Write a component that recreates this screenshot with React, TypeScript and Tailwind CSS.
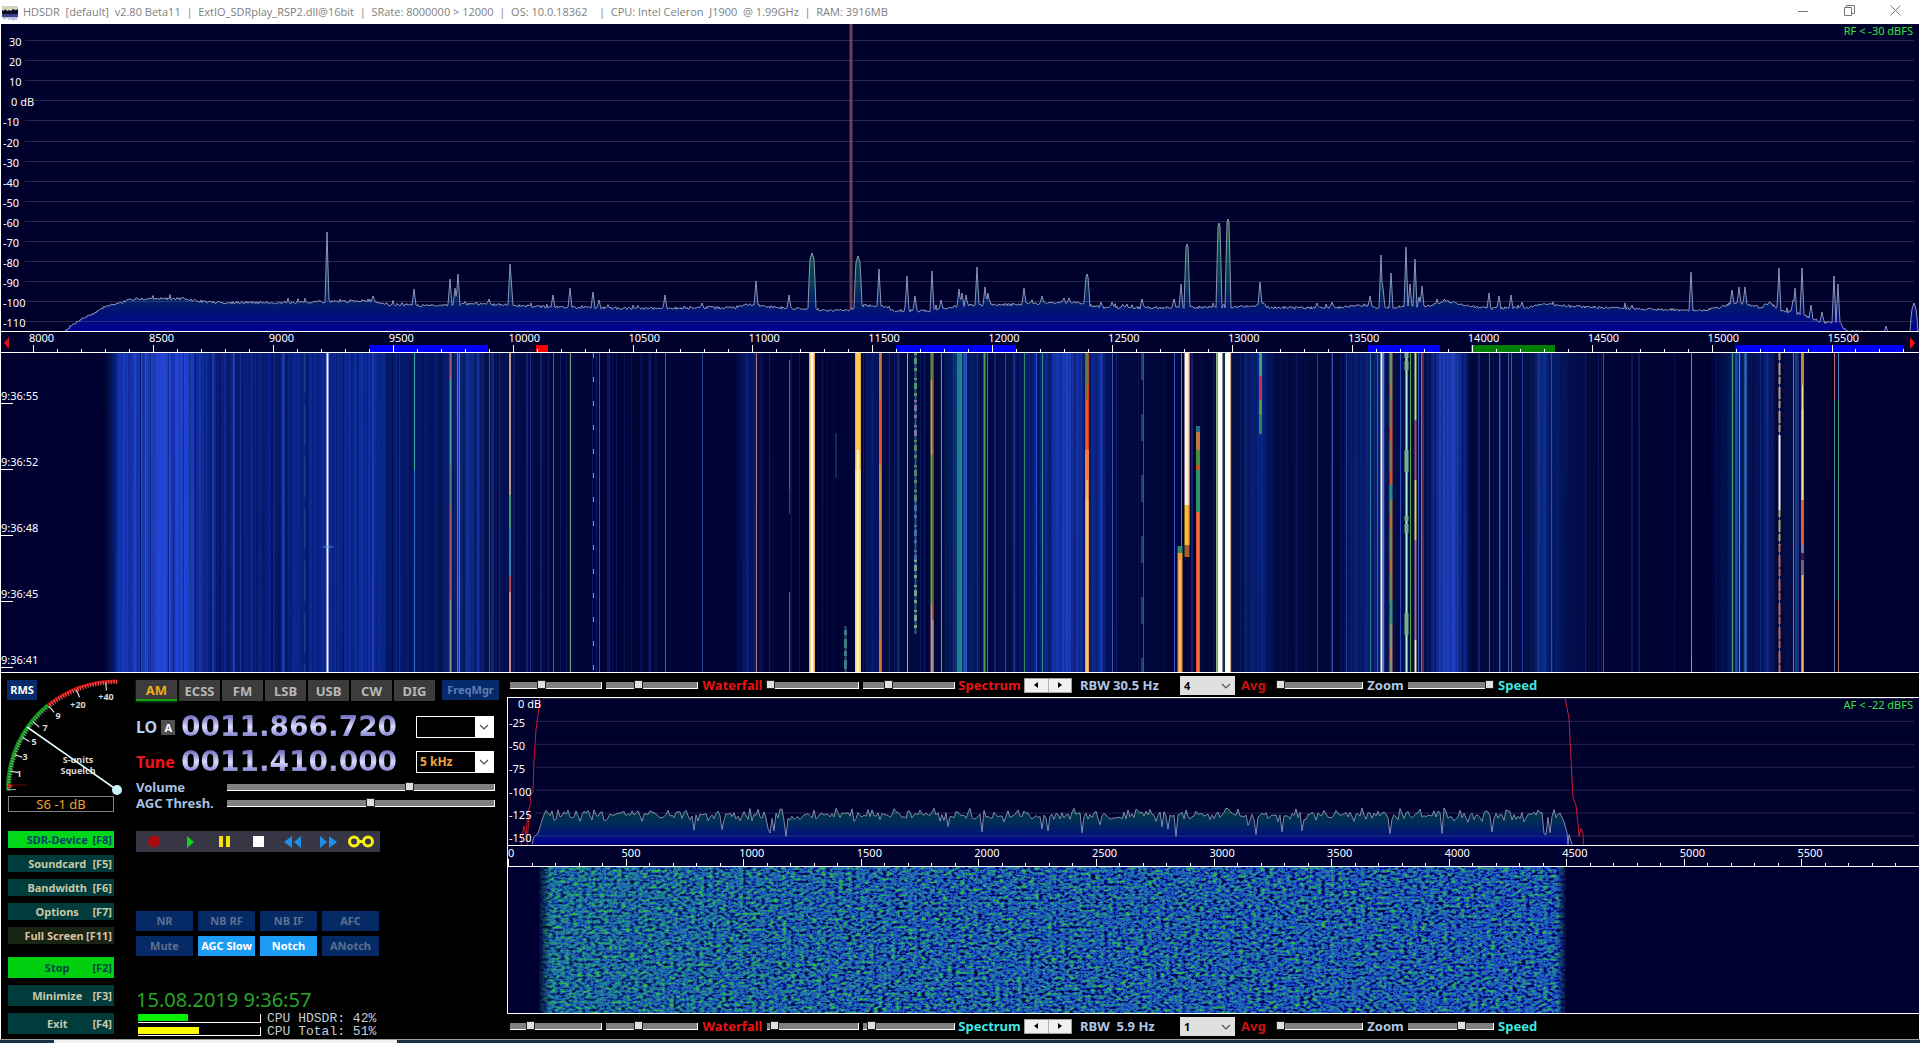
import { useState } from "react";
import type { ReactNode } from "react";

type Point = [number, number];

// small seeded generator so the traces look the same on every load
function createRandom(seed: number) {
  let s = seed;
  return () => {
    s = (s * 1664525 + 1013904223) % 4294967296;
    return s / 4294967296;
  };
}

const baseline: Point[] = [
  [65, 331], [80, 320], [95, 313], [105, 307], [125, 302], [135, 299], [180, 299], [195, 301],
  [215, 303], [290, 303], [330, 302], [370, 301], [390, 305], [430, 306], [470, 304], [500, 305],
  [540, 307], [640, 309], [735, 308], [745, 305], [780, 308], [800, 309], [812, 309], [825, 311],
  [850, 310], [860, 306], [880, 306], [895, 311], [930, 311], [960, 306], [1010, 305], [1060, 303],
  [1080, 303], [1100, 308], [1170, 308], [1250, 307], [1262, 304], [1270, 308], [1340, 308],
  [1360, 305], [1380, 308], [1430, 306], [1445, 301], [1465, 306], [1490, 309], [1530, 308],
  [1545, 304], [1560, 306], [1600, 308], [1700, 311], [1720, 308], [1730, 304], [1745, 304],
  [1760, 308], [1770, 303], [1780, 311], [1800, 314], [1815, 320], [1825, 323], [1840, 323],
  [1843, 329], [1850, 332], [1919, 333],
];

// x, top, half width
const peaks: [number, number, number][] = [
  [327, 232, 1], [373, 296, 1], [414, 289, 1], [450, 279, 1], [455, 288, 1], [458, 274, 1],
  [489, 299, 1], [510, 264, 1], [511, 276, 1], [553, 295, 1], [570, 288, 1], [593, 292, 1],
  [599, 300, 1], [665, 295, 1], [702, 303, 1], [756, 281, 1], [789, 295, 1], [812, 253, 3],
  [858, 256, 3], [879, 269, 1], [907, 276, 1], [915, 296, 1], [932, 271, 1], [941, 300, 1],
  [959, 289, 1], [962, 293, 1], [966, 295, 1], [977, 267, 1], [985, 287, 1], [988, 293, 1],
  [1024, 288, 1], [1042, 296, 1], [1064, 298, 1], [1069, 298, 1], [1087, 274, 2], [1101, 302, 1],
  [1112, 302, 1], [1142, 299, 1], [1174, 299, 1], [1181, 284, 1], [1187, 244, 2], [1219, 223, 2],
  [1228, 219, 2], [1260, 282, 1], [1317, 303, 1], [1332, 302, 1], [1370, 296, 1], [1381, 255, 1],
  [1383, 288, 1], [1391, 273, 1], [1406, 247, 1], [1410, 284, 1], [1415, 259, 1], [1419, 297, 1],
  [1422, 286, 1], [1489, 293, 1], [1499, 296, 1], [1511, 295, 1], [1522, 302, 1], [1691, 272, 1],
  [1732, 290, 1], [1739, 287, 1], [1745, 287, 1], [1779, 268, 1], [1793, 300, 1], [1795, 288, 1],
  [1802, 268, 1], [1811, 305, 1], [1822, 312, 1], [1834, 276, 1], [1838, 284, 1], [1886, 326, 1],
  [1914, 303, 3],
];

function levelAt(x: number) {
  for (let i = 1; i < baseline.length; i++) {
    const [x0, y0] = baseline[i - 1];
    const [x1, y1] = baseline[i];
    if (x <= x1) return y0 + ((x - x0) / (x1 - x0)) * (y1 - y0);
  }
  return 332;
}

function buildRfTrace() {
  const rand = createRandom(7);
  let d = "M65 332";
  for (let x = 65; x <= 1918; x++) {
    const floor = levelAt(x);
    let y = floor - rand() * 2.8 + 1;
    if (rand() > 0.95 && x > 130 && x < 1830) y -= rand() * 5;
    for (const [px, top, half] of peaks) {
      const dist = Math.abs(x - px);
      if (dist < half) y = Math.min(y, top + dist * 3);
      else if (dist === half) y = Math.min(y, floor - (floor - top) * 0.5);
    }
    d += `L${x} ${y.toFixed(1)}`;
  }
  return d;
}

function buildAfTrace() {
  const rand = createRandom(21);
  let d = "M532 845L534 837L538 834L541 824L544 815";
  for (let x = 546; x < 1562; x += 2) {
    const dip = rand() > 0.96;
    const y = dip ? 825 + rand() * 12 : 808 + (rand() + rand()) * 7.5;
    d += `L${x} ${y.toFixed(1)}`;
  }
  return d + "L1564 822L1567 833L1568 845L1569 835L1572 845";
}

const rfTrace = buildRfTrace();
const afTrace = buildAfTrace();

const rfLabels = ["30", "20", "10", "0 dB", "-10", "-20", "-30", "-40", "-50", "-60", "-70", "-80", "-90", "-100", "-110"];
const afLabels = ["0 dB", "-25", "-50", "-75", "-100", "-125", "-150"];

const bands = [
  { from: 369, to: 488, color: "bg-[#0000ff]" },
  { from: 536, to: 548, color: "bg-[#ff0000]" },
  { from: 896, to: 1016, color: "bg-[#0000ff]" },
  { from: 1368, to: 1440, color: "bg-[#0000ff]" },
  { from: 1471, to: 1555, color: "bg-[#008000]" },
  { from: 1735, to: 1904, color: "bg-[#0000ff]" },
];

const haze: [number, string][] = [
  [0, "#000030"], [103, "#000030"], [108, "#020e48"], [118, "#1434b4"], [135, "#1d40cc"],
  [150, "#2348d8"], [182, "#2248da"], [198, "#1436b8"], [215, "#0a2590"], [250, "#0a2388"],
  [300, "#0b2790"], [335, "#0d2a9a"], [375, "#1030a8"], [388, "#061d74"], [440, "#051866"],
  [465, "#0b2888"], [479, "#1233a6"], [486, "#041050"], [510, "#05145c"], [530, "#020d48"],
  [570, "#00053a"], [735, "#000436"], [743, "#061a6c"], [756, "#061664"], [766, "#00053a"],
  [800, "#000030"], [862, "#00053a"], [872, "#07207c"], [882, "#020c48"], [940, "#000838"],
  [955, "#0a3484"], [972, "#06206c"], [990, "#020a44"], [1010, "#04165c"], [1050, "#0a2890"],
  [1064, "#2044d0"], [1076, "#1434b0"], [1090, "#0a2484"], [1103, "#1030a0"], [1108, "#020d48"],
  [1150, "#00063a"], [1200, "#000436"], [1240, "#03124e"], [1258, "#0a2c98"], [1275, "#020c48"],
  [1340, "#000638"], [1350, "#061c70"], [1378, "#07227c"], [1395, "#030e4c"], [1425, "#031050"],
  [1438, "#1436b4"], [1450, "#2244c8"], [1464, "#0e2e9c"], [1470, "#00083c"], [1530, "#03104c"],
  [1545, "#0c2c90"], [1558, "#051a68"], [1575, "#041258"], [1595, "#000638"], [1710, "#000030"],
  [1726, "#04165c"], [1738, "#0e3898"], [1752, "#041258"], [1760, "#041258"], [1768, "#0f309c"],
  [1776, "#00063a"], [1796, "#041252"], [1808, "#000434"], [1830, "#000030"], [1920, "#000030"],
];

type Carrier = { x: number; w: number; dash?: string; segs: [number, number, string][] };

const line = (x: number, w: number, color: string, dash?: string): Carrier => ({ x, w, dash, segs: [[353, 672, color]] });

const carriers: Carrier[] = [
  line(213, 1, "#2f50c8"), line(234, 1, "#3a64c8"), line(305, 1, "#1f4c90", "40 12"),
  line(283, 1, "#3050c8"), line(327.5, 2, "#f0f8ff"), line(373, 1, "#3252cc"),
  { x: 414.5, w: 1, segs: [[353, 470, "#2fa89a"], [470, 672, "#2f6ac8"]] },
  { x: 450.5, w: 2, segs: [[353, 380, "#a06078"], [380, 465, "#38a088"], [465, 505, "#5a7878"], [505, 600, "#a06070"], [600, 672, "#7a9080"]] },
  { x: 457.5, w: 1, segs: [[353, 672, "#2fb040"]] },
  { x: 459.5, w: 1, segs: [[353, 672, "#e04860"]] },
  line(489.5, 1, "#2c54d8"), line(493, 1, "#2040a8"),
  { x: 510, w: 2, segs: [[353, 495, "#c09a88"], [495, 528, "#3a9a78"], [528, 576, "#3080b8"], [576, 592, "#b04058"], [592, 672, "#c89080"]] },
  line(527, 1, "#20389c"), line(541, 1, "#203890"), line(553.5, 1, "#3a5cc4"), line(570.5, 1, "#6f9c78"),
  line(593.5, 1, "#7a9ca0", "5 19"), line(599.5, 1, "#2a4cb4"), line(608, 1, "#182c88"),
  line(650, 1, "#182c88"), line(665.5, 1, "#3064c4"), line(702.5, 1, "#244088"),
  line(756.5, 1, "#b07c88"),
  { x: 789.5, w: 1, segs: [[360, 490, "#3c7a58"], [490, 514, "#305080"], [592, 672, "#506c88"]] },
  { x: 836, w: 1, segs: [[433, 478, "#20489c"]] },
  { x: 845.5, w: 2, segs: [[626, 672, "#245474"]] },
  { x: 845.5, w: 3, dash: "5 4 9 3", segs: [[630, 672, "#3a7c80"]] },
  line(812, 6, "#f0a83c"),
  line(812, 3, "#fffbe8"),
  { x: 858, w: 6, segs: [[353, 470, "#f0b23c"], [470, 672, "#f8cf7c"]] },
  { x: 858, w: 3, segs: [[353, 450, "#ffce5a"], [450, 672, "#fff4bc"]] },
  { x: 880, w: 2, segs: [[353, 400, "#c07840"], [400, 465, "#d85a30"], [465, 520, "#c49040"], [520, 640, "#b07c50"], [640, 672, "#d87038"]] },
  line(881.5, 1, "#2f9a50"),
  line(898, 1, "#2444a8"), line(907.5, 1, "#d098a0"),
  { x: 915.5, w: 2, segs: [[353, 634, "#2a5c78"]] },
  { x: 915.5, w: 3, dash: "2 3 6 4 3 7", segs: [[353, 400, "#4a9a70"], [400, 440, "#8074a0"], [440, 500, "#4a8a68"], [500, 560, "#3a70a8"], [560, 634, "#6aa890"]] },
  { x: 931.5, w: 2, segs: [[353, 380, "#40a050"], [380, 455, "#c0a068"], [455, 605, "#38b050"], [605, 672, "#c08890"]] },
  { x: 933, w: 1, segs: [[353, 620, "#d8782c"], [620, 672, "#e8d0c8"]] },
  line(941.5, 1, "#48a07c"), line(959, 4, "#1a808c"), line(961.5, 1, "#2a9a70"), line(964.5, 2, "#2760bc"), line(966.5, 1, "#3258c8"),
  line(984.5, 2, "#3ca850"), line(987.5, 1, "#3c64d0"), line(995, 1, "#223c94"),
  line(1005.5, 1, "#2444b8"), line(1014, 1, "#2444b8"), line(1024.5, 1, "#34886a"), line(1036.5, 1, "#2c58d0"), line(1042.5, 1, "#30907c"),
  { x: 1087, w: 4, segs: [[353, 385, "#a05030"], [385, 450, "#d8401c"], [450, 500, "#ee8040"], [500, 672, "#f2a050"]] },
  { x: 1087, w: 1, segs: [[353, 400, "#38a050"], [400, 480, "#ff7048"], [480, 672, "#ffe09c"]] },
  line(1101.5, 2, "#1c3cb8"), line(1112.5, 1, "#3c58b4"), line(1142, 1, "#3a7cb4", "27 34"), line(1143.5, 1, "#3050a8"),
  line(1174.5, 1, "#3458d0"), line(1181.5, 1, "#2a98a8"),
  { x: 1187, w: 5, segs: [[353, 505, "#fff0e8"], [505, 545, "#f4c020"], [545, 557, "#a06030"]] },
  { x: 1189, w: 1, segs: [[353, 505, "#e09060"], [505, 545, "#e07828"]] },
  { x: 1180, w: 5, segs: [[546, 553, "#2a9070"], [553, 672, "#ee9838"]] },
  { x: 1180, w: 1, segs: [[560, 672, "#ffe090"]] },
  { x: 1198, w: 4, segs: [[426, 432, "#207088"], [432, 450, "#c07838"], [450, 465, "#40903c"], [465, 470, "#c85024"], [470, 512, "#2c9468"], [512, 672, "#ea4828"]] },
  { x: 1198, w: 1, segs: [[512, 672, "#f49c50"]] },
  line(1192, 1, "#20409c"), line(1216.5, 1, "#88bc80"), line(1220, 5, "#ffffff"), line(1224, 1, "#1c5c30"), line(1225.5, 1, "#c8f0c0"), line(1228, 5, "#ffffff"), line(1230.5, 1, "#c8b090"),
  { x: 1260.5, w: 3, segs: [[353, 376, "#3ca074"], [376, 400, "#c03848"], [400, 415, "#48a040"], [415, 434, "#2c8458"]] },
  line(1317.5, 1, "#203c98"), line(1332.5, 1, "#2c4cb0"), line(1346.5, 1, "#203c98"), line(1370.5, 1, "#287c98"), line(1377.5, 1, "#2a5cd8"),
  line(1381.5, 2, "#e8f8f4"), line(1383.5, 1, "#30989c"),
  { x: 1391, w: 3, segs: [[353, 400, "#a07c40"], [400, 485, "#d05428"], [485, 500, "#28888c"], [500, 600, "#b87034"], [600, 624, "#389478"], [624, 672, "#c08050"]] },
  line(1390, 1, "#30946c", "30 14"), line(1400.5, 1, "#2850c8"),
  line(1406.5, 2, "#b4f0dc"), line(1406.5, 4, "#7cae90", "5 3 9 80 22 44"), line(1410.5, 1, "#48b04c"),
  { x: 1415.5, w: 2, segs: [[353, 420, "#c8e060"], [420, 480, "#b84c50"], [480, 540, "#f0d040"], [540, 640, "#c06a70"], [640, 672, "#f0f0a0"]] },
  line(1418.5, 1, "#2c60d0"), line(1421.5, 1, "#3ca04c"), line(1423, 1, "#b0405c"),
  line(1440, 1, "#2848b8"), line(1479, 1, "#203c98"), line(1489.5, 1, "#3458c0"), line(1499.5, 1, "#3c60c8"), line(1508.5, 1, "#3c60b4"), line(1511.5, 1, "#3a58c0"),
  line(1522.5, 1, "#20389c"), line(1538, 1, "#2444b4"), line(1551.5, 1, "#2c4cbc"), line(1603.5, 1, "#3850a0"), line(1639, 1, "#182c7c"), line(1632, 1, "#182870"),
  { x: 1691.5, w: 1, segs: [[353, 655, "#e05c50"], [655, 672, "#60c060"]] },
  line(1732.5, 1, "#4ca86c"), line(1736, 1, "#2c68b8"), line(1739.5, 1, "#90904c"), line(1745.5, 2, "#2c74c8"),
  { x: 1779.5, w: 1, segs: [[353, 672, "#806060"]] },
  { x: 1779.5, w: 2, dash: "7 3 12 2", segs: [[353, 435, "#c09880"], [510, 545, "#a0b078"], [545, 672, "#c06c58"]] },
  { x: 1779.5, w: 2, segs: [[435, 510, "#f0f4f4"]] },
  line(1793.5, 1, "#30a070"), line(1796, 1, "#3468cc"), line(1798, 1, "#2844a8"),
  { x: 1802.5, w: 3, segs: [[353, 385, "#c08828"], [385, 410, "#709068"], [410, 500, "#d8a038"], [500, 545, "#e05c28"], [545, 553, "#708098"], [553, 560, "#401838"], [560, 575, "#706868"], [575, 672, "#ea7038"]] },
  { x: 1802.5, w: 1, segs: [[385, 500, "#ece088"], [575, 672, "#f8b070"]] },
  { x: 1834.5, w: 1, segs: [[353, 400, "#c06468"], [400, 480, "#3c9078"], [480, 672, "#5c7ca8"]] },
  { x: 1838.5, w: 1, segs: [[353, 400, "#3c7cc0"], [400, 600, "#409a80"], [600, 672, "#b87c5c"]] },
];

function buildFaintLines() {
  const rand = createRandom(99);
  return Array.from({ length: 260 }, () => ({
    x: Math.round(112 + rand() * 1700) + 0.5,
    color: rand() > 0.45 ? "#2c50d8" : "#00083c",
    opacity: 0.1 + rand() * 0.28,
  }));
}
const faintLines = buildFaintLines();

const scanTimes = ["9:36:55", "9:36:52", "9:36:48", "9:36:45", "9:36:41"];

function TitleBar() {
  return (
    <header className="flex h-6 shrink-0 items-start justify-between bg-white text-[#808080]">
      <div className="flex items-center gap-[5px] pl-[2px]">
        <svg className="mt-[2px] h-4 w-4" viewBox="0 0 16 16" aria-hidden="true">
          <rect width="16" height="5" y="1" fill="#d8d4b8" />
          <path d="M0 5l2 1 1-2 2 2 2-1 2 1 2-2 2 1 1 0 2-1v6H0z" fill="#10102c" />
          <path d="M0 9h16v3H0z" fill="#3c4488" />
          <path d="M0 12h16l-2 4-1-2-2 2-2-2-2 1-2-2-3 2z" fill="#b8bce0" />
        </svg>
        <h1 className="whitespace-pre font-['Open_Sans','Noto_Sans',sans-serif] text-[11px] leading-6">
          HDSDR  [default]  v2.80 Beta11  |  ExtIO_SDRplay_RSP2.dll@16bit  |  SRate: 8000000 &gt; 12000  |  OS: 10.0.18362    |  CPU: Intel Celeron  J1900  @ 1.99GHz  |  RAM: 3916MB
        </h1>
      </div>
      <div className="flex h-5 pr-[2px]">
        <button type="button" aria-label="Minimize" className="flex w-[46px] items-center justify-center">
          <svg className="h-[11px] w-[11px]" viewBox="0 0 11 11" fill="none" stroke="#777"><path d="M0 6.5h10" /></svg>
        </button>
        <button type="button" aria-label="Restore" className="flex w-[46px] items-center justify-center">
          <svg className="h-[11px] w-[11px]" viewBox="0 0 11 11" fill="none" stroke="#777"><path d="M.5 2.5h7v8h-7zM2.5 2.5v-2h8v8h-3" /></svg>
        </button>
        <button type="button" aria-label="Close" className="flex w-[46px] items-center justify-center">
          <svg className="h-[11px] w-[11px]" viewBox="0 0 11 11" fill="none" stroke="#777"><path d="M.5.5l10 10M10.5.5l-10 10" /></svg>
        </button>
      </div>
    </header>
  );
}

function RfSpectrum() {
  return (
    <section aria-label="RF spectrum" className="relative min-h-48 flex-[307] overflow-hidden bg-[#00002c]">
      <svg className="absolute inset-0 h-full w-full" viewBox="1 24 1918 307" preserveAspectRatio="none">
        <defs>
          <linearGradient id="rfFill" gradientUnits="userSpaceOnUse" x1="0" y1="215" x2="0" y2="331">
            <stop offset="0" stopColor="#2c6a18" />
            <stop offset=".3" stopColor="#00503c" />
            <stop offset=".6" stopColor="#063a58" />
            <stop offset=".76" stopColor="#001c68" />
            <stop offset="1" stopColor="#000092" />
          </linearGradient>
        </defs>
        <path d={`${rfTrace}L1918 333Z`} fill="url(#rfFill)" />
        {rfLabels.map((label, i) => (
          <path key={label} d={`M${label === "0 dB" ? 34 : 25} ${40.5 + Math.round(i * 20.1)}H1914`} stroke="#8080a0" strokeOpacity=".3" />
        ))}
        <path d={rfTrace} fill="none" stroke="#9aa0c0" strokeWidth=".9" />
        <path d="M851 24V310" stroke="#8c5468" strokeOpacity=".75" strokeWidth="3" />
      </svg>
      {rfLabels.map((label, i) => (
        <span
          key={label}
          className={`absolute -translate-y-1/2 text-[11px] leading-none text-white ${label.startsWith("-") ? "left-[2px]" : label === "0 dB" ? "left-[10px]" : "left-2"}`}
          style={{ top: `${((17 + i * 20.1) / 307) * 100}%` }}
        >
          {label}
        </span>
      ))}
      <p className="absolute right-[6px] top-0 text-[11px] leading-[14px] text-[#3ce03c]">RF &lt; -30 dBFS</p>
    </section>
  );
}

function FrequencyAxis() {
  const ticks = Array.from({ length: 79 }, (_, i) => 8000 + i * 100);
  const pos = (f: number) => `${((32 + (f - 8000) * 0.2398) / 1918) * 100}%`;
  return (
    <div className="relative h-[22px] shrink-0 overflow-hidden border-y border-white bg-[#00002c]">
      {bands.map((band) => (
        <span
          key={band.from}
          className={`absolute bottom-0 h-[7px] ${band.color}`}
          style={{ left: `${((band.from - 1) / 1918) * 100}%`, width: `${((band.to - band.from) / 1918) * 100}%` }}
        />
      ))}
      {ticks.map((f) => (
        <span
          key={f}
          className={`absolute bottom-0 w-px bg-white ${f % 500 === 0 ? "h-[7px]" : "h-[3px]"}`}
          style={{ left: pos(f) }}
        />
      ))}
      {ticks.filter((f) => f % 500 === 0).map((f) => (
        <span key={f} className="absolute top-0 -ml-1 text-[11px] leading-[11px] text-white" style={{ left: pos(f) }}>
          {f}
        </span>
      ))}
      <svg className="absolute left-[3px] top-[5px] h-3 w-[5px]" viewBox="0 0 5 12" aria-hidden="true"><path d="M5 0v12L0 6z" fill="#e01020" /></svg>
      <svg className="absolute right-1 top-[5px] h-3 w-[5px]" viewBox="0 0 5 12" aria-hidden="true"><path d="M0 0v12l5-6z" fill="#ff1010" /></svg>
    </div>
  );
}

function RfWaterfall() {
  return (
    <section aria-label="RF waterfall" className="relative min-h-48 flex-[319] overflow-hidden bg-[#000030]">
      <svg className="absolute inset-0 h-full w-full" viewBox="1 353 1918 319" preserveAspectRatio="none">
        <defs>
          <linearGradient id="haze" gradientUnits="userSpaceOnUse" x1="0" y1="0" x2="1920" y2="0">
            {haze.map(([x, color], i) => (
              <stop key={i} offset={x / 1920} stopColor={color} />
            ))}
          </linearGradient>
          <filter id="streaks" x="0" y="0" width="1" height="1" colorInterpolationFilters="sRGB">
            <feTurbulence type="fractalNoise" baseFrequency="0.35 0.0004" numOctaves="2" seed="4" />
            <feColorMatrix values="0 0 0 0 0  0 0 0 0 .02  0 0 0 0 .2  1.6 0 0 0 -.65" />
          </filter>
        </defs>
        <rect x="0" y="353" width="1920" height="319" fill="url(#haze)" />
        {faintLines.map((l, i) => (
          <path key={i} d={`M${l.x} 353V672`} stroke={l.color} strokeOpacity={l.opacity} />
        ))}
        <rect x="0" y="353" width="1920" height="319" filter="url(#streaks)" />
        {carriers.map((c, i) =>
          c.segs.map(([from, to, color]) => (
            <path key={`${i}-${from}`} d={`M${c.x} ${from}V${to}`} stroke={color} strokeWidth={c.w} strokeDasharray={c.dash} />
          ))
        )}
        <ellipse cx="328" cy="547" rx="6" ry="1.5" fill="#6090f0" opacity=".4" />
      </svg>
      {scanTimes.map((time, i) => (
        <span
          key={time}
          className="absolute left-0 -translate-y-1/2 pb-[3px] text-[11px] leading-[11px] text-white after:absolute after:bottom-0 after:left-0 after:h-px after:w-3 after:bg-white"
          style={{ top: `${((44 + i * 66) / 319) * 100}%` }}
        >
          {time}
        </span>
      ))}
    </section>
  );
}

const scaleMarks = [
  { label: "1", x: 19, y: 777 },
  { label: "3", x: 25, y: 760 },
  { label: "5", x: 34, y: 745 },
  { label: "7", x: 45, y: 731 },
  { label: "9", x: 58, y: 719 },
  { label: "+20", x: 78, y: 708 },
  { label: "+40", x: 106, y: 700 },
];
const majorAngles = [10, 19, 29, 39, 51, 68, 84];

function SMeter() {
  const tick = (deg: number, outer: number, inner: number) => {
    const a = (deg * Math.PI) / 180;
    const x = -Math.cos(a);
    const y = -Math.sin(a);
    return `M${(117 + x * outer).toFixed(1)} ${(790 + y * outer).toFixed(1)}L${(117 + x * inner).toFixed(1)} ${(790 + y * inner).toFixed(1)}`;
  };
  const fine = (from: number, to: number) => {
    let d = "";
    for (let a = from; a <= to; a += 1.4) d += tick(a, 110, 106);
    return d;
  };
  return (
    <div className="relative">
      <svg className="h-[122px] w-[126px]" viewBox="1 673 126 122" role="img" aria-label="S-meter">
        <path d="M8 790A109 109 0 0 1 48 705" fill="none" stroke="#0c8c18" strokeWidth="4" />
        <path d="M48 705A109 109 0 0 1 117 681" fill="none" stroke="#b80c0c" strokeWidth="3" />
        <path d={fine(0, 51)} stroke="#70b878" strokeWidth="1" />
        <path d={fine(52, 90)} stroke="#f85050" strokeWidth="1.2" />
        {majorAngles.map((a) => (
          <path key={a} d={tick(a, 108, 100)} stroke="#d8d8d8" strokeWidth="1.2" />
        ))}
        <path d="M8 785H27" stroke="#700808" />
        <path d="M8 784l6 2-6 2z" fill="#e02020" />
        <path d="M8 789.500H16" stroke="#a0a0a0" />
        <g fill="#d8d8d8" fontSize="9" fontWeight="700" textAnchor="middle">
          {scaleMarks.map((m) => (
            <text key={m.label} x={m.x} y={m.y}>{m.label}</text>
          ))}
          <text x="78" y="763">S-units</text>
          <text x="78" y="774">Squelch</text>
        </g>
        <path d="M117 790L27 727" stroke="#e4ffff" strokeWidth="1.6" />
        <circle cx="117" cy="790" r="5" fill="#c8f4fc" />
      </svg>
      <button type="button" className="absolute left-[6px] top-[7px] h-5 w-[30px] bg-[#062a6c] text-[11px] font-bold leading-5 text-white">
        RMS
      </button>
    </div>
  );
}

const deviceKeys = [
  { label: "SDR-Device", hotkey: "[F8]", look: "bg-[#00d818] text-[#06406c]" },
  { label: "Soundcard", hotkey: "[F5]", look: "bg-[#003c3c] text-[#c8c8a8]" },
  { label: "Bandwidth", hotkey: "[F6]", look: "bg-[#003c3c] text-[#c8c8a8]" },
  { label: "Options", hotkey: "[F7]", look: "bg-[#003c3c] text-[#c8c8a8]" },
  { label: "Full Screen", hotkey: "[F11]", look: "bg-[#1a2414] text-[#d8c0a0]" },
];
const windowKeys = [
  { label: "Stop", hotkey: "[F2]", look: "bg-[#00d010] text-[#004a44]" },
  { label: "Minimize", hotkey: "[F3]", look: "bg-[#003c3c] text-[#c8c8a8]" },
  { label: "Exit", hotkey: "[F4]", look: "bg-[#003c3c] text-[#c8c8a8]" },
];

function HotkeyButton({ label, hotkey, look, size }: { label: string; hotkey: string; look: string; size: string }) {
  return (
    <button type="button" className={`flex w-full items-center whitespace-nowrap pl-[14px] pr-[2px] text-[11px] font-bold leading-none ${size} ${look}`}>
      <span className="flex-1 text-center">{label}</span>
      <span>{hotkey}</span>
    </button>
  );
}

function Slider({ label, value, className }: { label: string; value: number; className: string }) {
  const [current, setCurrent] = useState(value);
  return (
    <input
      type="range"
      aria-label={label}
      min={0}
      max={100}
      value={current}
      onChange={(e) => setCurrent(Number(e.target.value))}
      className={`h-[7px] shrink-0 appearance-none border-b border-r border-white bg-[#808080] [&::-webkit-slider-thumb]:h-[7px] [&::-webkit-slider-thumb]:w-[7px] [&::-webkit-slider-thumb]:appearance-none [&::-webkit-slider-thumb]:bg-[#e0e0e0] [&::-webkit-slider-thumb]:shadow-[0_0_0_1px_#202020] ${className}`}
    />
  );
}

function Chevron({ className }: { className: string }) {
  return (
    <svg className={className} viewBox="0 0 10 6" fill="none" stroke="#505050" strokeWidth="1.2" aria-hidden="true">
      <path d="M1 1l4 4 4-4" />
    </svg>
  );
}

function StepSelect({ label, options }: { label: string; options: string[] }) {
  return (
    <div className="relative ml-auto mr-[13px] h-[22px] w-[78px] border border-white bg-black">
      <select aria-label={label} className="block h-5 w-full appearance-none pl-[3px] text-xs font-bold leading-5 text-[#f0a840]">
        {options.map((o) => (
          <option key={o}>{o}</option>
        ))}
      </select>
      <span className="pointer-events-none absolute inset-y-0 right-0 flex w-[18px] items-center justify-center bg-white">
        <Chevron className="h-[6px] w-[10px]" />
      </span>
    </div>
  );
}

function Frequency({ value }: { value: string }) {
  return (
    <span className="bg-linear-to-b from-[#6c68b8] via-[#dcdcff] to-[#6c68c0] bg-clip-text font-['DejaVu_Sans',sans-serif] text-[28px] font-bold leading-6 text-transparent">
      {value}
    </span>
  );
}

const transport: { name: string; icon: ReactNode }[] = [
  { name: "Record", icon: <circle cx="15" cy="10.500" r="6" fill="#a80c10" /> },
  { name: "Play", icon: <path d="M13 5v12l7-6z" fill="#10d020" /> },
  { name: "Pause", icon: <path d="M10 5h4v11h-4zM17 5h4v11h-4z" fill="#f8e010" /> },
  { name: "Stop playback", icon: <path d="M9 5h11v11H9z" fill="#fff" /> },
  { name: "Rewind", icon: <path d="M13 5v12L5 11zM22 5v12l-7-6z" fill="#1c90e8" /> },
  { name: "Fast forward", icon: <path d="M6 5v12l7-6zM15 5v12l8-6z" fill="#1c90e8" /> },
  {
    name: "Loop",
    icon: (
      <g fill="none" stroke="#f8f010" strokeWidth="3">
        <circle cx="6" cy="10.500" r="4.500" />
        <circle cx="20" cy="10.500" r="4.500" />
        <path d="M10 10.500h6" />
      </g>
    ),
  },
];

const filters = ["NR", "NB RF", "NB IF", "AFC", "Mute", "AGC Slow", "Notch", "ANotch"];

const cpuLoads = [
  { label: "CPU HDSDR:", value: 42, color: "bg-[#00f000]" },
  { label: "CPU Total:", value: 51, color: "bg-[#ffff00]" },
];

function ControlPanel() {
  const [mode, setMode] = useState("AM");
  const [active, setActive] = useState(["AGC Slow", "Notch"]);

  const toggle = (name: string) =>
    setActive(active.includes(name) ? active.filter((n) => n !== name) : [...active, name]);

  return (
    <aside className="flex w-[506px] shrink-0 bg-black">
      <div className="w-[126px] shrink-0">
        <SMeter />
        <div className="ml-[7px] w-[106px]">
          <output className="mt-px block h-4 border border-[#808080] text-center text-[13px] leading-[15px] text-[#f0a030]">S6 -1 dB</output>
          <div className="mt-[19px] flex flex-col gap-[7px]">
            {deviceKeys.map((k) => (
              <HotkeyButton key={k.hotkey} {...k} size="h-[17px]" />
            ))}
          </div>
          <div className="mt-[13px] flex flex-col gap-[7px]">
            {windowKeys.map((k) => (
              <HotkeyButton key={k.hotkey} {...k} size="h-[21px]" />
            ))}
          </div>
        </div>
      </div>

      <div className="min-w-0 flex-1 pl-[9px] pt-[7px]">
        <div className="flex gap-[2px]">
          {["AM", "ECSS", "FM", "LSB", "USB", "CW", "DIG"].map((m) => (
            <button
              key={m}
              type="button"
              onClick={() => setMode(m)}
              className={`h-[21px] w-[41px] bg-[#3c3c3c] text-[13px] font-bold leading-5 ${
                mode === m ? "border-b-2 border-[#1ca018] text-[#f0a820] shadow-[0_1px_2px_#0a6008]" : "text-[#b8b8b8]"
              }`}
            >
              {m}
            </button>
          ))}
          <button type="button" className="ml-[5px] h-5 w-[57px] bg-[#062a6c] text-[11px] font-bold leading-5 text-[#5c7cb0]">
            FreqMgr
          </button>
        </div>

        <div className="mt-[14px] flex h-6 items-center">
          <span className="flex w-[45px] items-center gap-1 text-base font-bold text-[#b4ccf0]">
            LO
            <button type="button" className="h-[15px] w-[14px] bg-[#505050] text-[11px] font-bold leading-[15px] text-white">A</button>
          </span>
          <Frequency value="0011.866.720" />
          <StepSelect label="LO step" options={["", "1 kHz", "5 kHz"]} />
        </div>
        <div className="mt-[11px] flex h-6 items-center">
          <span className="w-[45px] text-base font-bold text-[#f01414]">Tune</span>
          <Frequency value="0011.410.000" />
          <StepSelect label="Tune step" options={["5 kHz", "9 kHz", "10 kHz"]} />
        </div>

        <div className="mt-[5px] flex h-4 items-center text-[13px] font-bold text-[#a8c0e0]">
          <span className="w-[91px] leading-4">Volume</span>
          <Slider label="Volume" value={69} className="w-[268px]" />
        </div>
        <div className="flex h-4 items-center text-[13px] font-bold text-[#a8c0e0]">
          <span className="w-[91px] leading-4">AGC Thresh.</span>
          <Slider label="AGC Thresh." value={54} className="w-[268px]" />
        </div>

        <div className="mt-5 flex h-[21px] w-[244px] justify-around bg-[#363644]">
          {transport.map((t) => (
            <button key={t.name} type="button" aria-label={t.name}>
              <svg className="h-[21px] w-7" viewBox="0 0 28 21">{t.icon}</svg>
            </button>
          ))}
        </div>

        <div className="mt-[59px] grid w-[243px] grid-cols-4 gap-[5px]">
          {filters.map((name) => (
            <button
              key={name}
              type="button"
              aria-pressed={active.includes(name)}
              onClick={() => toggle(name)}
              className={`h-5 whitespace-nowrap text-[11px] font-bold leading-5 ${
                active.includes(name) ? "bg-[#1c9cf4] text-white" : "bg-[#062a66] text-[#5c708c]"
              }`}
            >
              {name}
            </button>
          ))}
        </div>

        <time className="mt-8 block text-xl leading-6 text-[#28a428]">15.08.2019 9:36:57</time>
        {cpuLoads.map((cpu) => (
          <div key={cpu.label} className="flex h-[13px] items-center gap-[6px]">
            <span className="ml-[2px] h-[9px] w-[123px] border-b border-r border-white">
              <span className={`block h-[7px] ${cpu.color}`} style={{ width: `${cpu.value - 1}%` }} />
            </span>
            <span className="whitespace-pre font-['Liberation_Mono',monospace] text-[13px] leading-3 text-[#c4ccd8]">
              {cpu.label} {cpu.value}%
            </span>
          </div>
        ))}
      </div>
    </aside>
  );
}

type ToolbarProps = {
  name: string;
  levels: number[];
  spectrumColor: string;
  rbw: string;
  average: string;
};

function ChartToolbar({ name, levels, spectrumColor, rbw, average }: ToolbarProps) {
  return (
    <div className="flex h-6 shrink-0 items-center pl-[3px] text-[13px] font-bold leading-6">
      <Slider label={`${name} waterfall low`} value={levels[0]} className="mr-1 w-[92px]" />
      <Slider label={`${name} waterfall high`} value={levels[1]} className="w-[92px]" />
      <span className="w-[69px] text-center text-[#e81414]">Waterfall</span>
      <Slider label={`${name} spectrum low`} value={levels[2]} className="mr-1 w-[92px]" />
      <Slider label={`${name} spectrum high`} value={levels[3]} className="w-[92px]" />
      <span className={`w-[69px] text-center ${spectrumColor}`}>Spectrum</span>
      <div className="flex h-[15px] w-12 border border-[#a0a0a0] bg-[#f0f0f0]">
        <button type="button" aria-label={`${name} RBW down`} className="flex flex-1 items-center justify-center border-r border-[#b0b0b0]">
          <svg className="h-[6px] w-[4px]" viewBox="0 0 4 6"><path d="M4 0v6L0 3z" /></svg>
        </button>
        <button type="button" aria-label={`${name} RBW up`} className="flex flex-1 items-center justify-center">
          <svg className="h-[6px] w-[4px]" viewBox="0 0 4 6"><path d="M0 0v6l4-3z" /></svg>
        </button>
      </div>
      <span className="w-[108px] whitespace-pre pl-2 text-[#b0c8e8]">{rbw}</span>
      <div className="relative h-[19px] w-[55px] bg-[#e0e0e0]">
        <select aria-label={`${name} averaging`} defaultValue={average} className="block h-full w-full appearance-none pl-1 text-[11px] font-bold leading-[19px] text-black">
          {["1", "2", "4", "8"].map((n) => (
            <option key={n}>{n}</option>
          ))}
        </select>
        <Chevron className="pointer-events-none absolute right-1 top-[7px] h-[6px] w-[10px]" />
      </div>
      <span className="w-[42px] pl-[6px] text-[#c81414]">Avg</span>
      <Slider label={`${name} zoom`} value={levels[4]} className="w-[86px]" />
      <span className="w-[45px] text-center text-[#b0c8e8]">Zoom</span>
      <Slider label={`${name} speed`} value={levels[5]} className="mr-1 w-[86px]" />
      <span className="text-[#40e8e0]">Speed</span>
    </div>
  );
}

function AfCharts() {
  const ticks = Array.from({ length: 60 }, (_, i) => i * 100);
  return (
    <div className="flex min-h-0 flex-1 flex-col border-b border-l border-t border-white">
      <section aria-label="AF spectrum" className="relative min-h-0 flex-1 overflow-hidden bg-[#00002c]">
        <svg className="absolute inset-0 h-full w-full" viewBox="508 698 1411 147" preserveAspectRatio="none">
          <defs>
            <linearGradient id="afFill" gradientUnits="userSpaceOnUse" x1="0" y1="808" x2="0" y2="845">
              <stop offset="0" stopColor="#003c34" />
              <stop offset=".4" stopColor="#002c58" />
              <stop offset="1" stopColor="#000090" />
            </linearGradient>
          </defs>
          <path d={`${afTrace}Z`} fill="url(#afFill)" />
          {afLabels.map((label, i) => (
            <path key={label} d={`M${i === 0 ? 542 : 536} ${698.5 + i * 23}H1914`} stroke="#8080a0" strokeOpacity=".3" />
          ))}
          <path d={afTrace} fill="none" stroke="#8c98b4" strokeWidth=".9" />
          <path d="M540 698L538 715L536 730L534 760L533 792L530 796L531 803L528 812L526 836L524 826L521 845M527 845L529 815" fill="none" stroke="#c81c28" />
          <path d="M1565 698L1569 718L1571 760L1573 798L1576 806L1578 824L1579 837L1581 829L1583 834L1583.500 845" fill="none" stroke="#c81c38" />
        </svg>
        {afLabels.map((label, i) => (
          <span
            key={label}
            className={`absolute text-[11px] leading-none text-white ${i === 0 ? "left-[10px]" : "left-px -translate-y-1/2"}`}
            style={{ top: `${((i * 23 + (i ? 1 : 0)) / 147) * 100}%` }}
          >
            {label}
          </span>
        ))}
        <p className="absolute right-[6px] top-0 text-[11px] leading-[14px] text-[#3ce03c]">AF &lt; -22 dBFS</p>
      </section>

      <div className="relative h-[22px] shrink-0 overflow-hidden border-y border-white bg-[#00002c]">
        {ticks.map((f) => (
          <span
            key={f}
            className={`absolute bottom-0 w-px bg-white ${f % 500 === 0 ? "h-[7px]" : "h-[3px]"}`}
            style={{ left: `${(f / 6000) * 100}%` }}
          />
        ))}
        {ticks.filter((f) => f % 500 === 0).map((f) => (
          <span
            key={f}
            className={`absolute top-0 text-[11px] leading-[13px] text-white ${f ? "-ml-1" : ""}`}
            style={{ left: `${(f / 6000) * 100}%` }}
          >
            {f}
          </span>
        ))}
      </div>

      <section aria-label="AF waterfall" className="relative min-h-0 flex-1 overflow-hidden bg-[#000030]">
        <svg className="absolute inset-0 h-full w-full" viewBox="508 867 1411 148" preserveAspectRatio="none">
          <defs>
            <filter id="speckle" x="0" y="0" width="1" height="1" colorInterpolationFilters="sRGB">
              <feTurbulence type="fractalNoise" baseFrequency="0.23 0.37" numOctaves="4" seed="11" />
              <feColorMatrix values="1.5 1.5 0 0 -1.02  1.5 1.5 0 0 -1.02  1.5 1.5 0 0 -1.02  0 0 0 0 1" />
              <feComponentTransfer>
                <feFuncR type="table" tableValues="0 .02 .12 .14 .12 .2" />
                <feFuncG type="table" tableValues="0 .06 .3 .42 .55 .75" />
                <feFuncB type="table" tableValues=".22 .58 .8 .7 .5 .25" />
              </feComponentTransfer>
            </filter>
            <linearGradient id="greenTint">
              <stop offset="0" stopColor="#18b848" stopOpacity=".18" />
              <stop offset=".35" stopColor="#10a060" stopOpacity=".06" />
              <stop offset="1" stopColor="#0040c0" stopOpacity=".08" />
            </linearGradient>
            <linearGradient id="edgeFade">
              <stop offset="0" stopColor="#000030" />
              <stop offset=".012" stopColor="#000030" stopOpacity="0" />
              <stop offset=".99" stopColor="#000030" stopOpacity="0" />
              <stop offset="1" stopColor="#000030" />
            </linearGradient>
          </defs>
          <rect x="539" y="867" width="1027" height="148" filter="url(#speckle)" />
          <rect x="539" y="867" width="1027" height="148" fill="url(#greenTint)" />
          <rect x="538" y="867" width="1029" height="148" fill="url(#edgeFade)" />
        </svg>
      </section>
    </div>
  );
}

export default function App() {
  return (
    <div className="flex min-h-screen flex-col bg-black font-['Noto_Sans','Open_Sans',sans-serif]">
      <TitleBar />
      <main className="flex flex-1 flex-col border-x border-white">
        <RfSpectrum />
        <FrequencyAxis />
        <RfWaterfall />
        <div className="flex shrink-0 border-t border-white pb-px">
          <ControlPanel />
          <div className="flex min-w-0 flex-1 flex-col bg-black">
            <ChartToolbar name="RF" levels={[33, 35, 0, 26, 0, 100]} spectrumColor="text-[#e81414]" rbw="RBW 30.5 Hz" average="4" />
            <AfCharts />
            <ChartToolbar name="AF" levels={[20, 35, 5, 6, 0, 64]} spectrumColor="text-[#40e8e0]" rbw="RBW  5.9 Hz" average="1" />
          </div>
        </div>
      </main>
      <footer className="flex h-1 shrink-0 border-t border-[#a0a0a0] bg-[#1c3040]">
        <span className="ml-[54px] w-[343px] bg-[#f0f0f0]" />
      </footer>
    </div>
  );
}
